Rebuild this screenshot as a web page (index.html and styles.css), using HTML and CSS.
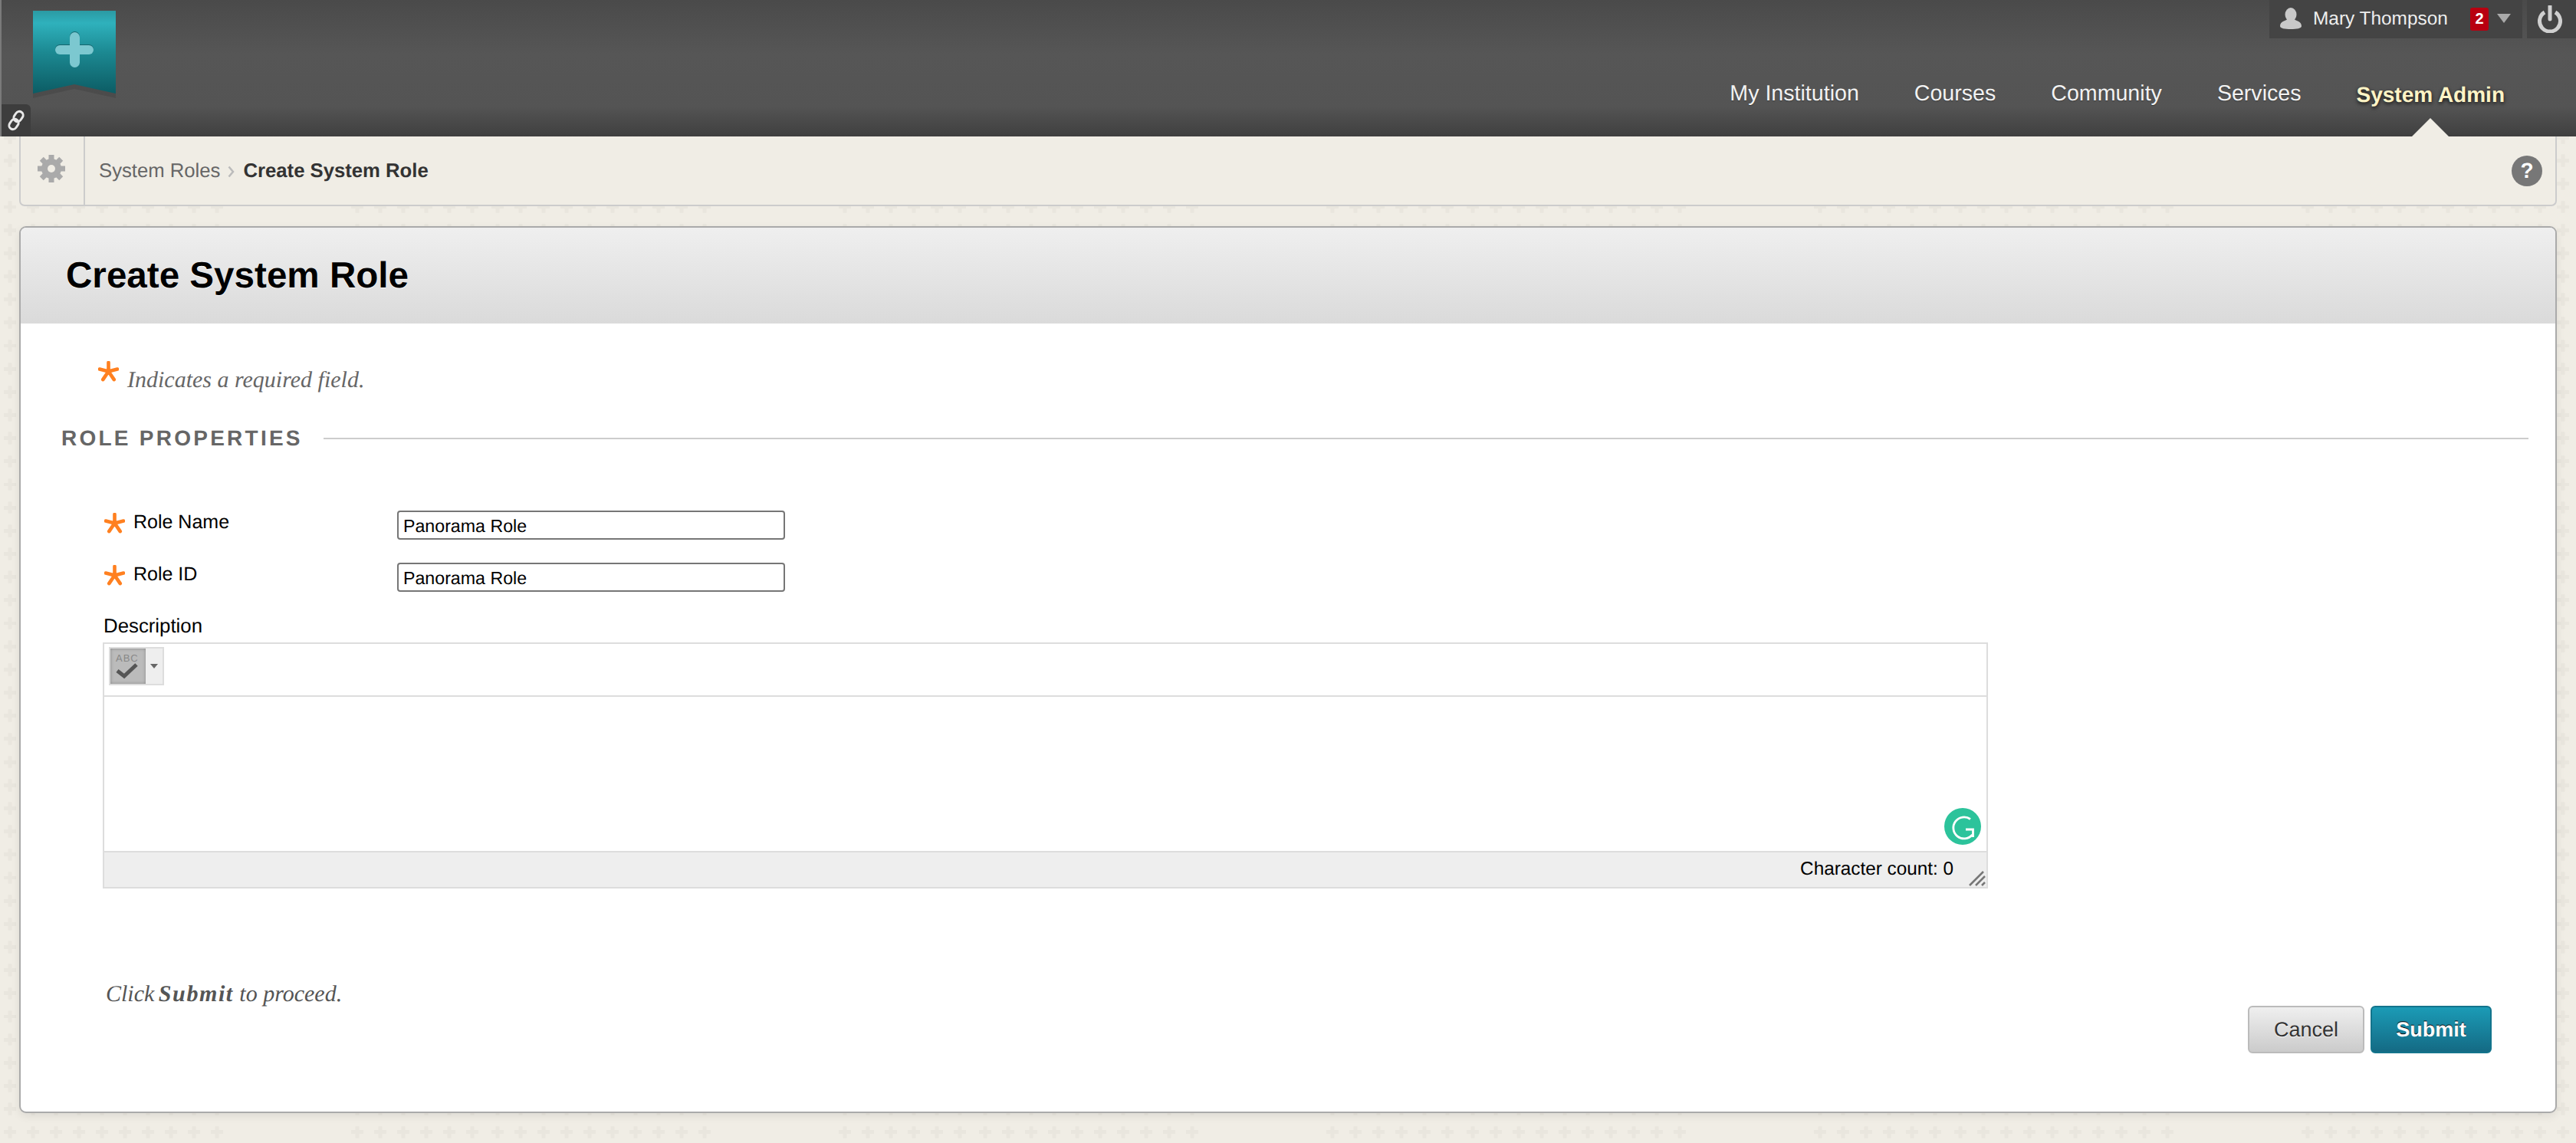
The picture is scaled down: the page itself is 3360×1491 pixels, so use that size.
FILE: index.html
```html
<!DOCTYPE html>
<html lang="en">
<head>
<meta charset="utf-8">
<title>Create System Role</title>
<link rel="stylesheet" href="styles.css">
</head>
<body>
<header class="topbar">
  <a class="logo" href="#">
    <svg width="118" height="120" viewBox="0 0 118 120">
      <defs>
        <linearGradient id="ribbon" x1="0" y1="0" x2="0" y2="1">
          <stop offset="0" stop-color="#2b9aa3"/>
          <stop offset=".15" stop-color="#2fb1bc"/>
          <stop offset=".5" stop-color="#1c8992"/>
          <stop offset="1" stop-color="#0c5c64"/>
        </linearGradient>
      </defs>
      <polygon points="5,3 113,3 113,111 59,99 5,111" fill="#000" opacity=".1" transform="translate(0,3)"/>
      <polygon points="5,0 113,0 113,108 59,96 5,108" fill="url(#ribbon)"/>
      <g fill="#14666e">
        <rect x="53" y="27" width="13" height="46" rx="6.500"/>
        <rect x="34" y="44" width="50" height="12" rx="6"/>
      </g>
      <g fill="#7cc8d0">
        <rect x="53" y="28" width="13" height="46" rx="6.500"/>
        <rect x="34" y="45" width="50" height="12" rx="6"/>
      </g>
    </svg>
  </a>
  <a class="link-tab" href="#" aria-label="Quick links">
    <svg width="24" height="28" viewBox="0 0 24 28" fill="none" stroke="#e8e8e8" stroke-width="3">
      <rect x="10" y="2" width="10" height="14" rx="5" transform="rotate(35 15 9)"/>
      <rect x="4" y="12" width="10" height="14" rx="5" transform="rotate(35 9 19)"/>
    </svg>
  </a>
  <div class="top-right">
    <div class="user-row">
      <div class="user-box">
        <svg class="user-icon" width="28" height="28" viewBox="0 0 28 28" fill="#c9c9c9">
          <ellipse cx="14" cy="9" rx="7.500" ry="9"/>
          <path d="M0 24 C0 18 7 17 10 15 h8 C21 17 28 18 28 24 C28 27 22 28 14 28 C6 28 0 27 0 24z"/>
        </svg>
        <span class="user-name">Mary Thompson</span>
        <span class="badge">2</span>
        <span class="caret"></span>
      </div>
      <div class="power-box">
        <svg width="34" height="36" viewBox="0 0 34 36" fill="none" stroke="#d0d0d0" stroke-width="5">
          <path d="M10 9 A13.500 13.500 0 1 0 24 9"/>
          <path d="M17 1 V18" stroke-linecap="round"/>
        </svg>
      </div>
    </div>
    <nav class="main-nav">
      <a class="nav-item" href="#">My Institution</a>
      <a class="nav-item" href="#">Courses</a>
      <a class="nav-item" href="#">Community</a>
      <a class="nav-item" href="#">Services</a>
      <a class="nav-item active" href="#">System Admin</a>
    </nav>
  </div>
</header>

<div class="crumbs">
  <div class="crumb-gear">
    <svg width="38" height="38" viewBox="-19 -19 38 38" fill="#aaa">
      <circle r="13"/>
      <rect x="-3.500" y="-18" width="7" height="7"/>
      <rect x="-3.500" y="-18" width="7" height="7" transform="rotate(45)"/>
      <rect x="-3.500" y="-18" width="7" height="7" transform="rotate(90)"/>
      <rect x="-3.500" y="-18" width="7" height="7" transform="rotate(135)"/>
      <rect x="-3.500" y="-18" width="7" height="7" transform="rotate(180)"/>
      <rect x="-3.500" y="-18" width="7" height="7" transform="rotate(225)"/>
      <rect x="-3.500" y="-18" width="7" height="7" transform="rotate(270)"/>
      <rect x="-3.500" y="-18" width="7" height="7" transform="rotate(315)"/>
      <circle r="5" fill="#f0ede5"/>
    </svg>
  </div>
  <div class="crumb-trail">
    <a class="crumb-link" href="#">System Roles</a>
    <svg class="crumb-sep" width="9" height="16" viewBox="0 0 9 16" fill="none" stroke="#bbb" stroke-width="2.500"><path d="M1.500 1.500 L7 8 L1.500 14.500"/></svg>
    <span class="crumb-current">Create System Role</span>
  </div>
  <span class="help">?</span>
</div>

<main class="card">
  <div class="card-head"><h1 class="card-title">Create System Role</h1></div>
  <form class="card-body">
    <p class="req-note">
      <svg class="ast ast-tall" viewBox="0 0 28 28"><path d="M14 14 V2 M14 14 L26 11 M14 14 L2 11 M14 14 L21.500 25 M14 14 L6.500 25"/></svg>
      <span class="req-text">Indicates a required field.</span>
    </p>
    <div class="section-head">
      <h2 class="section-title">ROLE PROPERTIES</h2>
      <span class="section-line"></span>
    </div>
    <div class="field field-first">
      <svg class="ast" viewBox="0 0 28 28"><path d="M14 14 V2 M14 14 L26 11 M14 14 L2 11 M14 14 L21.500 25 M14 14 L6.500 25"/></svg>
      <label class="field-label" for="rname">Role Name</label>
      <input class="text-input" id="rname" type="text" value="Panorama Role">
    </div>
    <div class="field">
      <svg class="ast" viewBox="0 0 28 28"><path d="M14 14 V2 M14 14 L26 11 M14 14 L2 11 M14 14 L21.500 25 M14 14 L6.500 25"/></svg>
      <label class="field-label" for="rid">Role ID</label>
      <input class="text-input" id="rid" type="text" value="Panorama Role">
    </div>
    <div class="desc-label">Description</div>
    <div class="editor">
      <div class="editor-toolbar">
        <div class="tool-btn">
          <div class="tool-main">
            <span class="tool-abc">ABC</span>
            <svg class="tool-check" width="30" height="22" viewBox="0 0 30 22" fill="none" stroke="#555" stroke-width="5"><path d="M2 11 L11 18 L27 3"/></svg>
          </div>
          <span class="tool-caret"></span>
        </div>
      </div>
      <div class="editor-area">
        <svg class="grammarly" width="48" height="48" viewBox="0 0 48 48">
          <circle cx="24" cy="24" r="24" fill="#2cc39b"/>
          <path d="M34 14.500 A14 14 0 1 0 36.500 35" fill="none" stroke="#fff" stroke-width="2.800"/>
          <path d="M28 28 H37.500 V38" fill="none" stroke="#fff" stroke-width="2.800"/>
        </svg>
      </div>
      <div class="editor-status">
        <span class="char-count">Character count: 0</span>
        <svg class="resize" width="22" height="20" viewBox="0 0 22 20" stroke="#777" stroke-width="2.500"><path d="M1 19 L19 1 M9 19 L21 7 M17 19 L21 15"/></svg>
      </div>
    </div>
    <div class="form-foot">
      <p class="foot-note">Click <strong class="foot-strong">Submit</strong> to proceed.</p>
      <div class="foot-buttons">
        <button class="btn btn-cancel" type="button">Cancel</button>
        <button class="btn btn-submit" type="button">Submit</button>
      </div>
    </div>
  </form>
</main>
</body>
</html>
```

FILE: styles.css
```css
* { box-sizing: border-box; }

html, body { margin: 0; padding: 0; }

body {
  height: 1491px;
  overflow: hidden;
  font-family: "Liberation Sans", Arial, sans-serif;
  text-rendering: geometricPrecision;
  color: #000;
  background-color: #f0ede5;
  background-image: url("data:image/svg+xml,%3Csvg xmlns='http://www.w3.org/2000/svg' width='636' height='30' viewBox='0 0 636 30' preserveAspectRatio='none'%3E%3Cdefs%3E%3Cpath id='p' d='M-2.500 -8h5v5.500h5.500v5h-5.500v5.500h-5v-5.500h-5.500v-5h5.500z' fill='%23e9e6de'/%3E%3C/defs%3E%3Cuse href='%23p' x='13' y='15'/%3E%3Cuse href='%23p' x='43' y='15'/%3E%3Cuse href='%23p' x='73' y='15'/%3E%3Cuse href='%23p' x='103' y='15'/%3E%3Cuse href='%23p' x='133' y='15'/%3E%3Cuse href='%23p' x='163' y='15'/%3E%3Cuse href='%23p' x='193' y='15'/%3E%3Cuse href='%23p' x='223' y='15'/%3E%3Cuse href='%23p' x='253' y='15'/%3E%3Cuse href='%23p' x='283' y='15'/%3E%3Cuse href='%23p' x='466' y='15'/%3E%3Cuse href='%23p' x='496' y='15'/%3E%3Cuse href='%23p' x='526' y='15'/%3E%3Cuse href='%23p' x='556' y='15'/%3E%3Cuse href='%23p' x='586' y='15'/%3E%3Cuse href='%23p' x='616' y='15'/%3E%3C/svg%3E");
  background-size: 636px 30.175px;
  background-position: 0 13.500px;
}

a { text-decoration: none; color: inherit; }

/* Top bar */
.topbar {
  position: relative;
  display: flex;
  justify-content: space-between;
  height: 178px;
  border-left: 2px solid #7a7a7a;
  background: linear-gradient(#4a4a4a 0, #565656 40%, #545454 78%, #3f3f3f 100%);
}

.logo {
  display: block;
  width: 118px;
  height: 120px;
  margin: 14px 0 0 36px;
}

.logo svg { display: block; }

.link-tab {
  position: absolute;
  left: 0;
  bottom: 0;
  display: flex;
  align-items: center;
  justify-content: center;
  width: 38px;
  height: 42px;
  background: #3d3d3d;
  border-top-right-radius: 6px;
}

.top-right {
  display: flex;
  flex-direction: column;
  align-items: flex-end;
}

.user-row {
  display: flex;
  gap: 6px;
  height: 50px;
}

.user-box {
  display: flex;
  align-items: center;
  width: 330px;
  padding-left: 14px;
  background: #444;
}

.user-icon { margin-top: -2px; }

.user-name {
  margin-left: 15px;
  width: 205px;
  font-size: 24.400px;
  color: #eee;
}

.badge {
  display: flex;
  align-items: center;
  justify-content: center;
  width: 24px;
  height: 30px;
  border-radius: 3px;
  background: #b80010;
  color: #fff;
  font-size: 20px;
  font-weight: 700;
}

.caret {
  width: 0;
  height: 0;
  margin: -2px 0 0 11px;
  border-left: 9px solid transparent;
  border-right: 9px solid transparent;
  border-top: 12px solid #aaa;
}

.power-box {
  display: flex;
  align-items: center;
  justify-content: center;
  width: 64px;
  padding-right: 4px;
  background: #444;
}

.main-nav {
  display: flex;
  align-items: flex-start;
  gap: 72px;
  margin-top: 54px;
  padding-right: 93px;
}

.nav-item {
  position: relative;
  font-size: 28.600px;
  line-height: 36px;
  color: #f2f2f2;
  text-shadow: 0 1px 1px rgba(0, 0, 0, .35);
}

.nav-item.active {
  margin-top: 2px;
  font-size: 28px;
  font-weight: 700;
  color: #fff4c6;
  text-shadow: 0 2px 5px rgba(0, 0, 0, .8);
}

.nav-item.active::after {
  content: "";
  position: absolute;
  left: 50%;
  top: 48px;
  margin-left: -24px;
  border-left: 24px solid transparent;
  border-right: 24px solid transparent;
  border-bottom: 24px solid #f0ede5;
}

/* Breadcrumb */
.crumbs {
  display: flex;
  align-items: stretch;
  height: 91px;
  margin: 0 25px;
  background: #f0ede5;
  border: 2px solid #ccc;
  border-top: 0;
  border-radius: 0 0 7px 7px;
}

.crumb-gear {
  display: flex;
  align-items: center;
  justify-content: center;
  width: 84px;
  padding-right: 2px;
  padding-bottom: 6px;
  border-right: 2px solid #ccc;
}

.crumb-trail {
  display: flex;
  align-items: center;
  flex: 1;
  padding: 1px 0 0 18px;
  font-size: 25.700px;
}

.crumb-link { color: #666; }

.crumb-sep { margin: 2px 11px 0 10px; }

.crumb-current {
  font-weight: 700;
  color: #333;
}

.help {
  display: flex;
  align-items: center;
  justify-content: center;
  align-self: center;
  width: 40px;
  height: 40px;
  margin-right: 17px;
  border-radius: 50%;
  background: #777;
  color: #fff;
  font-size: 28px;
  font-weight: 700;
}

/* Card */
.card {
  display: flex;
  flex-direction: column;
  height: 1157px;
  margin: 26px 25px 0;
  background: #fff;
  border: 2px solid #aaa;
  border-radius: 9px;
  box-shadow: 0 4px 12px rgba(0, 0, 0, .08);
  overflow: hidden;
}

.card-head {
  display: flex;
  align-items: center;
  flex: none;
  height: 125px;
  padding: 0 0 0 59px;
  background: linear-gradient(#efefef, #dadada);
}

.card-title {
  margin: 0;
  font-size: 47.600px;
  font-weight: 700;
  color: #000;
  text-shadow: 0 1px 0 #fff;
}

.card-body { display: block; }

.req-note {
  display: flex;
  align-items: flex-start;
  margin: 49px 0 0 101px;
}

.ast {
  flex: none;
  width: 27px;
  height: 27px;
  fill: none;
  stroke: #ff8020;
  stroke-width: 4.800;
  stroke-linecap: round;
}

.req-text {
  margin: 9px 0 0 11px;
  font-family: "Liberation Serif", "Times New Roman", serif;
  font-style: italic;
  font-size: 30px;
  line-height: 32px;
  color: #666;
}

.section-head {
  display: flex;
  align-items: center;
  gap: 27px;
  margin: 45px 35px 0 53px;
  height: 30px;
}

.section-title {
  margin: 0;
  font-size: 28px;
  font-weight: 700;
  letter-spacing: 3.250px;
  color: #666;
}

.section-line {
  flex: 1;
  height: 2px;
  background: #ccc;
}

.field {
  display: flex;
  align-items: flex-start;
  margin: 30px 0 0 109px;
}

.field-first { margin-top: 79px; }

.field .ast { margin-top: 3px; }

.field-label {
  width: 344px;
  margin-left: 11px;
  font-size: 25px;
  line-height: 30px;
}

.text-input {
  width: 506px;
  height: 38px;
  padding: 2px 6px 0;
  border: 2px solid #767676;
  border-radius: 4px;
  background: #fff;
  color: #000;
  font-family: "Liberation Sans", Arial, sans-serif;
  font-size: 23.200px;
  text-rendering: geometricPrecision;
}

.desc-label {
  margin: 30px 0 0 108px;
  font-size: 25.800px;
  line-height: 30px;
}

.editor {
  display: flex;
  flex-direction: column;
  width: 2459px;
  height: 321px;
  margin: 6px 0 0 107px;
  border: 2px solid #ddd;
}

.editor-toolbar {
  flex: none;
  height: 69px;
  padding: 4px 0 0 6px;
  border-bottom: 2px solid #ddd;
}

.tool-btn {
  display: flex;
  align-items: center;
  width: 72px;
  height: 50px;
  background: #eee;
  border: 2px solid #ddd;
}

.tool-main {
  position: relative;
  width: 46px;
  height: 46px;
  background: #bbb;
  box-shadow: inset 0 0 4px #888;
}

.tool-abc {
  position: absolute;
  left: 7px;
  top: 5px;
  font-size: 13px;
  letter-spacing: 1px;
  color: #888;
}

.tool-check {
  position: absolute;
  left: 7px;
  top: 18px;
}

.tool-caret {
  width: 0;
  height: 0;
  margin-left: 6px;
  border-left: 5px solid transparent;
  border-right: 5px solid transparent;
  border-top: 6px solid #666;
}

.editor-area {
  position: relative;
  flex: 1;
}

.grammarly {
  position: absolute;
  right: 7px;
  bottom: 8px;
}

.editor-status {
  position: relative;
  flex: none;
  height: 47px;
  padding: 4px 43px 0 0;
  border-top: 2px solid #ddd;
  background: #eee;
  text-align: right;
  font-size: 24.300px;
  line-height: 36px;
}

.resize {
  position: absolute;
  right: 1px;
  bottom: 1px;
}

.form-foot {
  display: flex;
  align-items: flex-start;
  justify-content: space-between;
  margin-top: 120px;
  padding: 0 83px 0 111px;
}

.foot-note {
  margin: 0;
  font-family: "Liberation Serif", "Times New Roman", serif;
  font-style: italic;
  font-size: 30px;
  line-height: 36px;
  color: #555;
}

.foot-strong {
  margin-left: -2px;
  font-weight: 700;
  letter-spacing: 1.600px;
}

.foot-buttons {
  display: flex;
  gap: 8px;
  margin-top: 33px;
}

.btn {
  height: 62px;
  border-radius: 6px;
  font-family: "Liberation Sans", Arial, sans-serif;
  font-size: 27px;
  padding: 0;
  text-rendering: geometricPrecision;
}

.btn-cancel {
  width: 152px;
  border: 2px solid #bbb;
  background: linear-gradient(#efefef, #cbcbcb);
  color: #333;
  text-shadow: 0 1px 0 #fff;
}

.btn-submit {
  width: 158px;
  border: 2px solid #13748c;
  background: linear-gradient(#1b9bb6, #146a84);
  color: #fff;
  font-weight: 700;
  text-shadow: 0 -1px 0 #000;
}
```
